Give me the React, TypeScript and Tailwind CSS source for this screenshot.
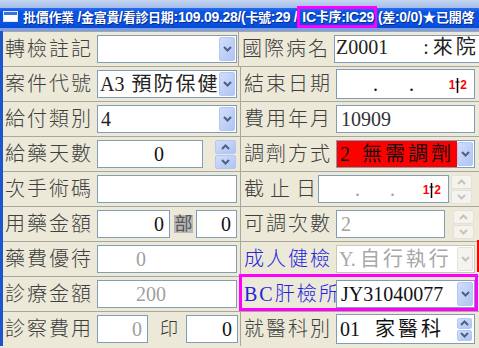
import React from 'react'

const serif = "font-['Liberation_Serif','Noto_Sans_CJK_TC',serif]"

function Chevron({ up = false, color = '#4D6185' }: { up?: boolean; color?: string }) {
  return (
    <svg width="9" height="6" viewBox="0 0 9 6">
      <path
        d={up ? 'M1 5 L4.5 1.5 L8 5' : 'M1 1 L4.5 4.5 L8 1'}
        fill="none"
        stroke={color}
        strokeWidth="2"
      />
    </svg>
  )
}

function DropBtn({ disabled = false }: { disabled?: boolean }) {
  return (
    <div
      className={`my-px mr-px flex w-[16px] shrink-0 self-stretch items-center justify-center rounded-[2px] border ${
        disabled
          ? 'border-[#E4E2D8] bg-[#F4F3EE]'
          : 'border-[#B4C6F2] bg-gradient-to-br from-[#D2DEFA] to-[#AFC4F4]'
      }`}
    >
      <Chevron color={disabled ? '#C6C4BA' : '#4D6185'} />
    </div>
  )
}

function Spin({ disabled = false, h = 14, w = 21 }: { disabled?: boolean; h?: number; w?: number }) {
  const cls = disabled
    ? 'border-[#E4E2D8] bg-[#F4F3EE]'
    : 'border-[#B4C6F2] bg-gradient-to-br from-[#D2DEFA] to-[#AFC4F4]'
  const c = disabled ? '#C6C4BA' : '#4D6185'
  return (
    <div className="flex shrink-0 flex-col gap-px">
      <div className={`flex items-center justify-center rounded-[2px] border ${cls}`} style={{ height: h, width: w }}>
        <Chevron up color={c} />
      </div>
      <div className={`flex items-center justify-center rounded-[2px] border ${cls}`} style={{ height: h, width: w }}>
        <Chevron color={c} />
      </div>
    </div>
  )
}

function DateMark() {
  return (
    <span className="flex items-end font-['Liberation_Sans',sans-serif] text-[12px] font-bold leading-none text-[#FF0000]">
      <span>1</span>
      <svg width="5" height="15" viewBox="0 0 5 15" className="mb-[-2px]">
        <line x1="2.5" y1="0" x2="2.5" y2="15" stroke="#000" strokeWidth="1.5" />
        <line x1="0.5" y1="4" x2="4.5" y2="4" stroke="#000" strokeWidth="1" />
      </svg>
      <span>2</span>
    </span>
  )
}

function Label({ children, blue = false, w = 'w-[92px]', track = 'tracking-[2px]' }: { children: React.ReactNode; blue?: boolean; w?: string; track?: string }) {
  return (
    <div className={`${w} shrink-0 whitespace-nowrap text-[20px] font-light leading-none ${track} ${blue ? 'text-[#2424E0]' : 'text-[#3f3f3f]'}`}>
      {children}
    </div>
  )
}

const field = 'flex h-[28px] items-center border border-[#7F9DB9] bg-white text-[20px] leading-none'

function Row({ left, right }: { left: React.ReactNode; right: React.ReactNode }) {
  return (
    <div className="flex h-[35px] border-t border-[#A9A79B]">
      <div className="flex w-[237px] items-center pl-[2px]">{left}</div>
      <div className="flex flex-1 items-center border-l border-[#A9A79B] pl-[3px]">{right}</div>
    </div>
  )
}

// CJK runs in the caption are a touch smaller than the latin text
function C({ children }: { children: React.ReactNode }) {
  return <span className="text-[13px]">{children}</span>
}

export default function App() {
  return (
    <div className={`relative h-[348px] w-[479px] overflow-hidden bg-[#ECE9D8] ${serif}`}>
      {/* Title bar */}
      <div className="flex h-[28px] items-center bg-[linear-gradient(#c6d6f1_0px,#a4bde9_8px,#2d6cec_8px,#0754e2_12px,#0552e4_24px,#0a49cc_28px)] pl-[3px] pt-[5px]">
        <div className="mr-[5px] h-[11px] w-[15px] shrink-0 border border-[#dfe8fb] bg-white">
          <div className="h-[3px] bg-[#3d72d8]" />
        </div>
        <div className="flex items-center whitespace-nowrap font-['Liberation_Sans','Noto_Sans_CJK_TC',sans-serif] text-[14px] font-bold leading-none tracking-[-0.3px] text-white [text-shadow:1px_1px_0_#0b2a8a]">
          <span><C>批價作業</C> /<C>金富貴</C>/<C>看診日期</C>:109.09.28/(<C>卡號</C>:29 /</span>
          <span className="mr-[1px] flex h-[22px] items-center border-[3px] border-[#FF00FF] pl-[2px]">IC<C>卡序</C>:IC29</span>
          <span>(<C>差</C>:0/0)★<C>已開啓</C></span>
        </div>
      </div>
      <div className="h-[3px] bg-[#7aa0ea]" />

      {/* Body */}
      <div className="border-l-[3px] border-[#1f55cc]">
        <Row
          left={<><Label>轉檢註記</Label><div className={`${field} w-[140px]`}><div className="flex-1" /><DropBtn /></div></>}
          right={
            <>
              <Label>國際病名</Label>
              <div className="h-[28px] w-[145px] overflow-hidden border border-r-0 border-[#7F9DB9] bg-white text-[20px] leading-[23px] text-[#222]">
                <div className="flex whitespace-pre pl-[1px]">
                  <span>{'Z0001       :'}</span>
                  <span className="ml-[4px] tracking-[3px]">來院</span>
                </div>
                <div className="mt-[3px] whitespace-pre pl-[2px] tracking-[3px]">就診未開立處方</div>
              </div>
            </>
          }
        />
        <Row
          left={
            <>
              <Label>案件代號</Label>
              <div className={`${field} w-[140px] bg-[#FDD8F6]`}>
                <div className="flex flex-1 overflow-hidden whitespace-nowrap pl-[2px] text-[#222]">
                  <span>A3</span>
                  <span className="ml-[7px] tracking-[2px]">預防保健</span>
                </div>
                <DropBtn />
              </div>
            </>
          }
          right={
            <>
              <Label>結束日期</Label>
              <div className={`${field} h-[30px] w-[139px] text-[#111]`}>
                <span className="ml-[36px]">.</span>
                <span className="ml-[31px]">.</span>
                <span className="ml-auto mr-[7px]"><DateMark /></span>
              </div>
            </>
          }
        />
        <Row
          left={<><Label>給付類別</Label><div className={`${field} w-[140px]`}><div className="flex-1 pl-[3px] text-[#222]">4</div><DropBtn /></div></>}
          right={<><Label>費用年月</Label><div className={`${field} w-[139px]`}><span className="pl-[4px] text-[#333]">10909</span></div></>}
        />
        <Row
          left={
            <>
              <Label>給藥天數</Label>
              <div className={`${field} w-[106px] justify-end bg-[#FF0000] pr-[38px] text-[#111]`}>0</div>
              <div className="ml-[12px]"><Spin /></div>
            </>
          }
          right={
            <>
              <Label>調劑方式</Label>
              <div className={`${field} w-[139px]`}>
                <div className="flex h-full flex-1 items-center overflow-hidden whitespace-nowrap bg-[#FF0000] pl-[3px] text-[#111]">
                  <span>2</span>
                  <span className="ml-[12px] tracking-[3px]">無需調劑</span>
                </div>
                <DropBtn />
              </div>
            </>
          }
        />
        <Row
          left={<><Label>次手術碼</Label><div className={`${field} w-[140px]`} /></>}
          right={
            <>
              <Label w="w-[74px]" track="tracking-[6px]">截止日</Label>
              <div className={`${field} w-[131px] text-[#A0A0A0]`}>
                <span className="ml-[36px]">.</span>
                <span className="ml-[30px]">.</span>
                <span className="ml-auto mr-[7px]"><DateMark /></span>
              </div>
              <div className="ml-[2px]"><Spin disabled h={14} w={21} /></div>
            </>
          }
        />
        <Row
          left={
            <>
              <Label>用藥金額</Label>
              <div className={`${field} w-[73px] justify-end pr-[5px] text-[#111]`}>0</div>
              <div className="ml-[4px] flex h-[18px] w-[19px] items-center justify-center bg-[#B8B8B8] text-[18px] leading-none text-[#555]">部</div>
              <div className={`${field} ml-[3px] w-[41px] justify-end pr-[5px] text-[#111]`}>0</div>
            </>
          }
          right={
            <>
              <Label>可調次數</Label>
              <div className={`${field} w-[109px] pl-[4px] text-[#A0A0A0]`}>2</div>
              <div className="ml-[8px]"><Spin disabled /></div>
            </>
          }
        />
        <Row
          left={<><Label>藥費優待</Label><div className={`${field} w-[140px] pl-[38px] text-[#A0A0A0]`}>0</div></>}
          right={
            <>
              <Label blue>成人健檢</Label>
              <div className={`${field} w-[139px] border-[#C9C7BA]`}>
                <div className="flex flex-1 whitespace-nowrap pl-[2px] text-[#A8A8A8]">
                  <span>Y.</span>
                  <span className="ml-[4px] tracking-[3px]">自行執行</span>
                </div>
                <DropBtn disabled />
              </div>
            </>
          }
        />
        <Row
          left={<><Label>診療金額</Label><div className={`${field} w-[140px] pl-[38px] text-[#A0A0A0]`}>200</div></>}
          right={
            <>
              <Label blue>BC肝檢所</Label>
              <div className={`${field} w-[139px]`}>
                <div className="flex-1 pl-[4px] text-[#111]">JY31040077</div>
                <DropBtn />
              </div>
            </>
          }
        />
        <Row
          left={
            <>
              <Label>診察費用</Label>
              <div className={`${field} w-[51px] justify-end pr-[5px] text-[#A0A0A0]`}>0</div>
              <div className="ml-[12px] w-[20px] text-[18px] font-light leading-none text-[#333]">印</div>
              <div className={`${field} ml-[6px] w-[52px] justify-end pr-[5px] text-[#111]`}>0</div>
            </>
          }
          right={
            <>
              <Label>就醫科別</Label>
              <div className={`${field} h-[30px] w-[139px]`}>
                <div className="flex flex-1 whitespace-nowrap pl-[3px] text-[#111]">
                  <span>01</span>
                  <span className="ml-[15px] tracking-[3px]">家醫科</span>
                </div>
                <div className="mr-[2px]"><Spin h={11} w={15} /></div>
              </div>
            </>
          }
        />
      </div>

      {/* overlays */}
      <div className="absolute left-[239px] top-[274px] h-[37px] w-[239px] border-[3px] border-[#FF00FF]" />
      <div className="absolute left-[477px] top-[240px] h-[32px] w-[2px] bg-[#FF0000]" />
    </div>
  )
}
